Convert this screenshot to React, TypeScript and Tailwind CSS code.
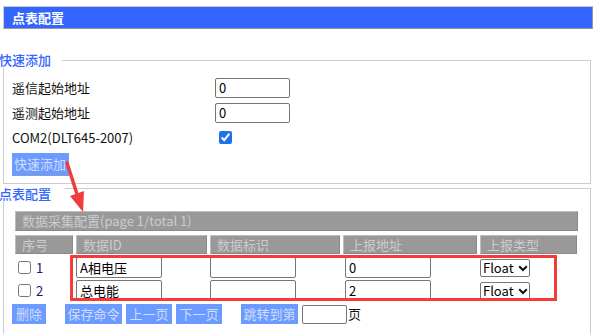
import React from 'react'

const rows = [
  { no: '1', id: 'A相电压', addr: '0' },
  { no: '2', id: '总电能', addr: '2' },
]

const btn = 'h-[20px] bg-[#6b9bff] text-[#d0dcff] text-[13px] leading-[20px] text-center'
const field = 'w-[86px] h-[21px] border border-[#767676] rounded-[2px] px-[3px] text-[13px] text-black'

const App: React.FC = () => {
  return (
    <div
      className="relative w-[593px] h-[334px] overflow-hidden bg-white text-[13px] text-[#111]"
      style={{ fontFamily: '"Noto Sans CJK SC", "Noto Sans", sans-serif' }}
    >
      <div className="pt-[6px] pl-[3px]">
        {/* title bar */}
        <div className="h-[23px] bg-[#3366ff] border border-[#cccccc] border-b-[#999999] border-r-[#999999] pl-[8px] text-white font-bold text-[13px] leading-[21px]">
          点表配置
        </div>

        {/* quick add */}
        <fieldset className="mt-[23px] mr-[2px] border border-[#cccccc] pl-[8px] pb-[7px]">
          <legend className="ml-[-13px] pr-[11px] text-[#3366ff] font-medium text-[13px] leading-[16px]">快速添加</legend>
          <div className="pt-[7px]">
            <div className="flex items-center h-[25px]">
              <span className="w-[203px]">遥信起始地址</span>
              <input
                defaultValue="0"
                className="w-[75px] h-[20px] border border-[#767676] rounded-[2px] px-[3px] text-[13px] text-black"
              />
            </div>
            <div className="flex items-center h-[25px]">
              <span className="w-[203px]">遥测起始地址</span>
              <input
                defaultValue="0"
                className="w-[75px] h-[20px] border border-[#767676] rounded-[2px] px-[3px] text-[13px] text-black"
              />
            </div>
            <div className="flex items-center h-[25px]">
              <span className="w-[207px]">COM2(DLT645-2007)</span>
              <input type="checkbox" defaultChecked className="w-[13px] h-[13px] m-0 accent-[#1a73e8]" />
            </div>
            <div className="mt-[3px] w-[57px] h-[23px] bg-[#6b9bff] text-[#d0dcff] leading-[22px] text-center border-b border-r border-[#8a9ccc]">
              快速添加
            </div>
          </div>
        </fieldset>

        {/* point table */}
        <fieldset className="mt-[-9px] mr-[2px] border border-[#cccccc] pl-[11px] pb-[20px]">
          <legend className="ml-[-16px] pr-[14px] pt-[12px] text-[#3366ff] font-medium text-[13px] leading-[14px]">点表配置</legend>
          <div className="pt-[10px]">
            <div className="w-[563px] h-[20px] bg-[#999999] border border-[#8a8a8a] border-t-[#bdbdbd] border-l-[#bdbdbd] pl-[6px] text-[#cccccc] leading-[18px]">
              数据采集配置(page 1/total 1)
            </div>
            <div className="mt-[4px] grid grid-cols-[58px_131px_130px_134px_97px] gap-x-[3px] h-[19px]">
              {['序号', '数据ID', '数据标识', '上报地址', '上报类型'].map((h) => (
                <div
                  key={h}
                  className="bg-[#999999] border border-[#8a8a8a] border-t-[#bdbdbd] border-l-[#bdbdbd] pl-[6px] text-[#cccccc] leading-[17px]"
                >
                  {h}
                </div>
              ))}
            </div>
            <div className="mt-[3px]">
              {rows.map((r) => (
                <div key={r.no} className="grid grid-cols-[58px_131px_130px_134px_97px] gap-x-[3px] h-[23px] items-start">
                  <div className="flex items-center h-[21px] pl-[3px]">
                    <input type="checkbox" className="w-[13px] h-[13px] m-0" />
                    <span className="ml-[5px] text-[#1a1a5e]">{r.no}</span>
                  </div>
                  <div>
                    <input defaultValue={r.id} className={field} />
                  </div>
                  <div>
                    <input className={field} />
                  </div>
                  <div className="pl-[2px]">
                    <input defaultValue={r.addr} className={field} />
                  </div>
                  <div className="pt-[2px]">
                    <div className="w-[50px] h-[18px] border border-[#767676] rounded-[2px] bg-white flex items-center pl-[2px] text-black leading-[16px]">
                      <span>Float</span>
                      <svg width="10" height="7" viewBox="0 0 10 7" className="ml-[4px]">
                        <path d="M1.2 1.3 L5 5 L8.8 1.3" fill="none" stroke="#111" strokeWidth="2" />
                      </svg>
                    </div>
                  </div>
                </div>
              ))}
            </div>
            <div className="ml-[-3px] mt-[1px] flex items-start">
              <div className={`${btn} w-[34px]`}>删除</div>
              <div className={`${btn} w-[57px] ml-[19px]`}>保存命令</div>
              <div className={`${btn} w-[46px] ml-[4px]`}>上一页</div>
              <div className={`${btn} w-[46px] ml-[4px]`}>下一页</div>
              <div className={`${btn} w-[57px] ml-[19px]`}>跳转到第</div>
              <input className="ml-[4px] w-[45px] h-[19px] border border-[#767676] rounded-[2px] mt-[1px]" />
              <span className="ml-[1px] leading-[20px]">页</span>
            </div>
          </div>
        </fieldset>
      </div>

      {/* red annotation box */}
      <div className="absolute left-[70px] top-[255px] w-[487px] h-[46px] border-[3px] border-[#f53a3a] pointer-events-none" />

      {/* red annotation arrow */}
      <svg className="absolute left-0 top-0 pointer-events-none" width="593" height="334">
        <line x1="67" y1="163" x2="77" y2="194" stroke="#f03c3c" strokeWidth="3.5" strokeLinecap="round" />
        <polygon points="70,196 84,191 83,212" fill="#f03c3c" />
      </svg>
    </div>
  )
}

export default App
